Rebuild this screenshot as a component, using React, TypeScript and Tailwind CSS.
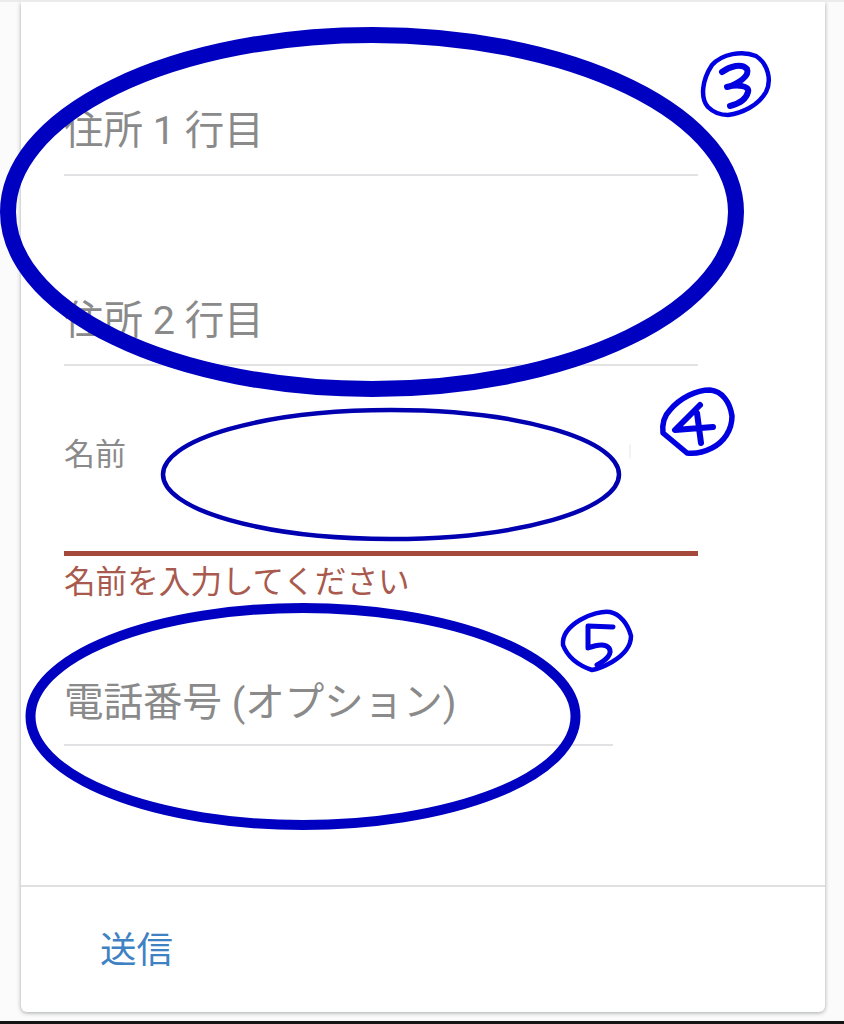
export default function App() {
  const font = { fontFamily: 'Roboto, "Noto Sans CJK JP", sans-serif' };
  return (
    <div className="relative h-[1024px] w-[844px] overflow-hidden border-t-2 border-[#ebebeb] bg-[#fbfbfb]" style={font}>
      <div className="ml-[21px] flex h-[1010px] w-[804px] flex-col rounded-b-[6px] bg-white shadow-[0_1px_4px_rgba(60,64,67,0.45)]">
        <div className="flex-1 pl-[43px]">
          <div className="flex h-[174px] w-[634px] items-end border-b-2 border-[#e2e2e4] pb-[18px] text-[39.5px] leading-[50px] text-[#8a8a8a]">住所 1 行目</div>
          <div className="flex h-[190px] w-[634px] items-end border-b-2 border-[#e2e2e4] pb-[18px] text-[39.5px] leading-[50px] text-[#8a8a8a]">住所 2 行目</div>
          <div className="flex h-[190px] w-[634px] items-start border-b-[5px] border-[#a5493d] pt-[68px] text-[31px] leading-[42px] text-[#8a8a8a]">名前</div>
          <div className="pt-[4px] text-[31.6px] leading-[46px] text-[#a85a4e]">名前を入力してください</div>
          <div className="flex h-[140px] w-[549px] items-end border-b-2 border-[#e2e2e4] pb-[16px] text-[39.5px] leading-[50px] text-[#8a8a8a]">電話番号 (オプション)</div>
        </div>
        <div className="flex h-[127px] items-start border-t-2 border-[#e0e0e2] pl-[79px] pt-[39px] text-[36.5px] leading-[50px] text-[#3f82c4]">送信</div>
      </div>
      <div className="absolute bottom-0 left-0 h-[3px] w-full bg-[#141414]" />
      <svg className="absolute left-0 top-[-2px]" width="844" height="1024" viewBox="0 0 844 1024" fill="none" strokeLinecap="round" strokeLinejoin="round">
        <ellipse cx="372" cy="212" rx="364" ry="177" stroke="#0000c0" strokeWidth="16" />
        <ellipse cx="391" cy="474.5" rx="228" ry="64.5" stroke="#0000b0" strokeWidth="4.5" />
        <ellipse cx="303" cy="716.5" rx="272.5" ry="108.5" stroke="#0000c0" strokeWidth="10" />
        <path d="M630 445V458" stroke="#e4e4e8" strokeWidth="1" />
        <g stroke="#0000e0">
          <path d="M708 107C700 98 702 80 712 65C722 54 742 50 756 56C768 64 772 80 766 92C758 106 742 113 728 115C720 115 713 112 708 107Z" strokeWidth="4.5" />
          <path d="M722 72C730 66 742 63 747 69C750 76 738 84 727 87C738 84 750 86 748 92C746 100 738 104 730 106" strokeWidth="6" />
          <path d="M663 433C662 424 664 416 670 410C680 398 696 390 710 390C722 391 730 402 732 416C732 430 724 442 712 448C704 452 695 454 687 453Z" strokeWidth="5.5" />
          <path d="M700 405L675 430L713 427M697 413L701 443" strokeWidth="6" />
          <path d="M592 670C580 666 568 658 563 645C562 634 570 626 580 620C590 614 602 611 610 612C620 614 628 624 631 636C631 648 622 656 612 662C605 666 598 669 592 670Z" strokeWidth="4.5" />
          <path d="M613 627L588 626L588 648C596 645 605 643 609 648C613 654 606 660 597 665" strokeWidth="5" />
        </g>
      </svg>
    </div>
  );
}
